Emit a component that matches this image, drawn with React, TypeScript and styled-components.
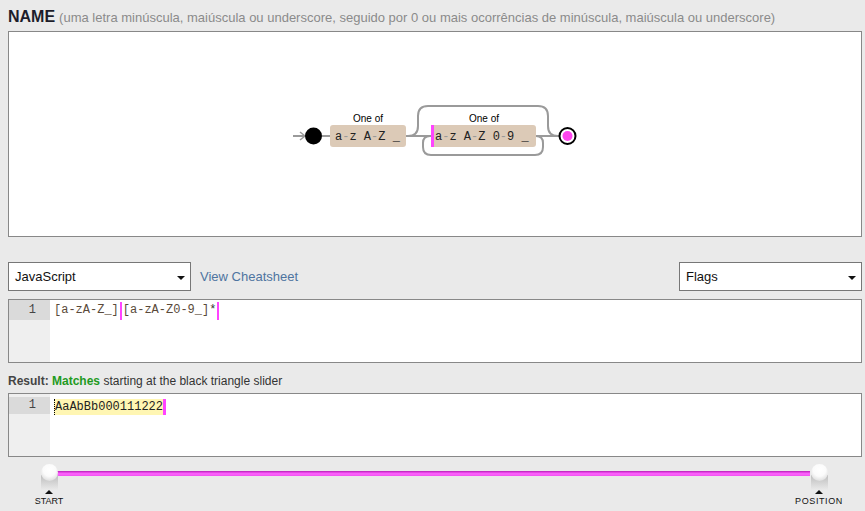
import React from "react";
import styled, { createGlobalStyle } from "styled-components";

const GlobalStyle = createGlobalStyle`
  html, body { margin: 0; padding: 0; }
  body {
    background: #eaeaea;
    font-family: "Liberation Sans", Arial, sans-serif;
    width: 865px;
    height: 511px;
    overflow: hidden;
  }
`;

const Page = styled.div`
  padding: 0 3px 0 8px;
`;

const Header = styled.div`
  height: 31px;
  box-sizing: border-box;
  padding-top: 7px;
  line-height: 19px;
  white-space: nowrap;
`;

const Title = styled.span`
  font-size: 16px;
  font-weight: bold;
  color: #1d1d2b;
`;

const Sub = styled.span`
  font-size: 13px;
  color: #8b8b8b;
  margin-left: 4px;
`;

const DiagramBox = styled.div`
  height: 206px;
  box-sizing: border-box;
  border: 1px solid #888;
  background: #fff;
  display: flex;
`;

const DiagramSvg = styled.svg`
  display: block;
  width: 852px;
  height: 204px;
`;

const Controls = styled.div`
  margin-top: 25px;
  display: flex;
  align-items: center;
  justify-content: space-between;
`;

const LeftGroup = styled.div`
  display: flex;
  align-items: center;
  gap: 9px;
`;

const Select = styled.div`
  width: 183px;
  height: 29px;
  box-sizing: border-box;
  border: 1px solid #777;
  background: #fff;
  display: flex;
  align-items: center;
  justify-content: space-between;
  padding: 0 5px 0 6px;
  font-size: 13px;
  color: #111;
`;

const Caret = styled.span`
  width: 0;
  height: 0;
  border-left: 4px solid transparent;
  border-right: 4px solid transparent;
  border-top: 4px solid #111;
  margin-top: 2px;
`;

const Link = styled.span`
  font-size: 13px;
  color: #4e74a0;
`;

const Editor = styled.div<{ $top: number }>`
  margin-top: ${(p) => p.$top}px;
  height: 64px;
  box-sizing: border-box;
  border: 1px solid #888;
  background: #fff;
  display: flex;
`;

const Gutter = styled.div<{ $pad: number }>`
  width: 41px;
  flex: none;
  background: #efefef;
  padding-top: ${(p) => p.$pad}px;
`;

const LineNo = styled.div<{ $h: number }>`
  height: ${(p) => p.$h}px;
  line-height: ${(p) => p.$h}px;
  background: #dadada;
  text-align: right;
  padding-right: 14px;
  font-family: "Liberation Mono", "Courier New", monospace;
  font-size: 12px;
  color: #444;
`;

const Code = styled.div<{ $pad: number; $h: number }>`
  padding: ${(p) => p.$pad}px 0 0 4px;
  font-family: "Liberation Mono", "Courier New", monospace;
  font-size: 12px;
  height: ${(p) => p.$h}px;
  line-height: ${(p) => p.$h}px;
  white-space: pre;
  display: flex;
  align-items: stretch;
`;

const Set = styled.span`
  color: #5a4a3a;
`;

const Plain = styled.span`
  color: #333;
`;

const Marker = styled.span`
  display: inline-block;
  width: 2px;
  background: #ff44ff;
  margin: 1px 1px 0 1px;
`;

const Highlight = styled.span`
  background: #fff6b3;
  color: #222;
  border-left: 1px dotted #000;
  margin: 1px 0 0 0;
  line-height: 16px;
  height: 16px;
`;

const EndMarker = styled.span`
  display: inline-block;
  width: 3px;
  height: 16px;
  margin-top: 1px;
  background: #ff44ff;
`;

const ResultLabel = styled.div`
  margin-top: 10px;
  margin-bottom: 4px;
  height: 16px;
  line-height: 16px;
  font-size: 12px;
  color: #333;
`;

const Bold = styled.span<{ $color: string }>`
  font-weight: bold;
  color: ${(p) => p.$color};
`;

const Slider = styled.div`
  position: relative;
  height: 54px;
  box-sizing: border-box;
  padding: 14px 52px 0 49px;
`;

const Track = styled.div`
  height: 5px;
  background: linear-gradient(#b020b0 0, #d838d8 20%, #ff66ff 55%, #f050f0 100%);
`;

const Knob = styled.div<{ $center: number }>`
  position: absolute;
  top: 7px;
  left: ${(p) => p.$center - 30}px;
  width: 60px;
  display: flex;
  flex-direction: column;
  align-items: center;
`;

const KnobBall = styled.div`
  width: 17px;
  height: 17px;
  border-radius: 50%;
  background: radial-gradient(circle at 50% 35%, #ffffff 0, #fbfbfb 45%, #dedede 80%, #c8c8c8 100%);
  position: relative;
  z-index: 1;
`;

const KnobBody = styled.div`
  width: 17px;
  height: 15px;
  margin-top: -6px;
  background: linear-gradient(#bdbdbd, #d8d8d8 60%, rgba(234, 234, 234, 0));
`;

const KnobTip = styled.div`
  width: 0;
  height: 0;
  border-left: 4px solid transparent;
  border-right: 4px solid transparent;
  border-bottom: 4px solid #111;
`;

const KnobLabel = styled.div<{ $spacing: number }>`
  font-size: 9px;
  line-height: 11px;
  margin-top: 2px;
  color: #111;
  letter-spacing: ${(p) => p.$spacing}px;
  white-space: nowrap;
`;

const LINE = "#9a9a9a";
const BOX = "#dccab7";
const MONO = `"Liberation Mono", "Courier New", monospace`;
const SANS = `"Liberation Sans", Arial, sans-serif`;

function RangeText({ x, parts }: { x: number; parts: string[] }) {
  return (
    <text x={x} y={140} fontFamily={MONO} fontSize={12} style={{ whiteSpace: "pre" }} fill="#222">
      {parts.map((p, i) => {
        const [a, b] = p.includes("-") ? p.split("-") : [p, null];
        return (
          <React.Fragment key={i}>
            {i > 0 && <tspan> </tspan>}
            <tspan>{a}</tspan>
            {b !== null && <tspan fill="#999">-</tspan>}
            {b !== null && <tspan>{b}</tspan>}
          </React.Fragment>
        );
      })}
    </text>
  );
}

function Diagram() {
  return (
    <DiagramSvg viewBox="9 32 852 204">
      <g fill="none" stroke={LINE} strokeWidth={2}>
        <path d="M293,136 H305" />
        <path d="M300,132 L305,136 L300,140" strokeWidth={1.5} />
        <path d="M322,136 H330" />
        <path d="M405,136 H432" />
        <path d="M536,136 H559" />
        <path d="M408,136 q10,0 10,-10 V116 q0,-10 10,-10 H538 q10,0 10,10 V126 q0,10 10,10" />
        <path d="M536,136 q7,0 7,7 V147 q0,8 -8,8 H431 q-8,0 -8,-8 V143 q0,-7 7,-7" />
      </g>
      <circle cx={313.5} cy={136} r={8.5} fill="#000" />
      <text x={368} y={122} textAnchor="middle" fontFamily={SANS} fontSize={10} fill="#000">
        One of
      </text>
      <rect x={330} y={125} width={76} height={22} rx={3} fill={BOX} />
      <RangeText x={335} parts={["a-z", "A-Z", "_"]} />
      <text x={484} y={122} textAnchor="middle" fontFamily={SANS} fontSize={10} fill="#000">
        One of
      </text>
      <rect x={431} y={125} width={105} height={22} rx={3} fill={BOX} />
      <rect x={431} y={125} width={3} height={22} fill="#ff44ff" />
      <RangeText x={435} parts={["a-z", "A-Z", "0-9", "_"]} />
      <circle cx={567.5} cy={136} r={8} fill="#fff" stroke="#000" strokeWidth={2} />
      <circle cx={567.5} cy={136} r={5} fill="#ff44ee" />
    </DiagramSvg>
  );
}

export default function App() {
  return (
    <Page>
      <GlobalStyle />
      <Header>
        <Title>NAME</Title>
        <Sub>
          (uma letra minúscula, maiúscula ou underscore, seguido por 0 ou mais ocorrências de minúscula, maiúscula ou underscore)
        </Sub>
      </Header>
      <DiagramBox>
        <Diagram />
      </DiagramBox>
      <Controls>
        <LeftGroup>
          <Select>
            <span>JavaScript</span>
            <Caret />
          </Select>
          <Link>View Cheatsheet</Link>
        </LeftGroup>
        <Select>
          <span>Flags</span>
          <Caret />
        </Select>
      </Controls>
      <Editor $top={8}>
        <Gutter $pad={0}>
          <LineNo $h={20}>1</LineNo>
        </Gutter>
        <Code $pad={1} $h={19}>
          <Set>[a-zA-Z_]</Set>
          <Marker />
          <Set>[a-zA-Z0-9_]</Set>
          <Plain>*</Plain>
          <Marker />
        </Code>
      </Editor>
      <ResultLabel>
        <Bold $color="#444">Result:</Bold> <Bold $color="#1f9a1f">Matches</Bold> starting at the black triangle slider
      </ResultLabel>
      <Editor $top={0}>
        <Gutter $pad={3}>
          <LineNo $h={17}>1</LineNo>
        </Gutter>
        <Code $pad={4} $h={17}>
          <Highlight>AaAbBb000111222</Highlight>
          <EndMarker />
        </Code>
      </Editor>
      <Slider>
        <Track />
        <Knob $center={41}>
          <KnobBall />
          <KnobBody />
          <KnobTip />
          <KnobLabel $spacing={0}>START</KnobLabel>
        </Knob>
        <Knob $center={811}>
          <KnobBall />
          <KnobBody />
          <KnobTip />
          <KnobLabel $spacing={0.6}>POSITION</KnobLabel>
        </Knob>
      </Slider>
    </Page>
  );
}
